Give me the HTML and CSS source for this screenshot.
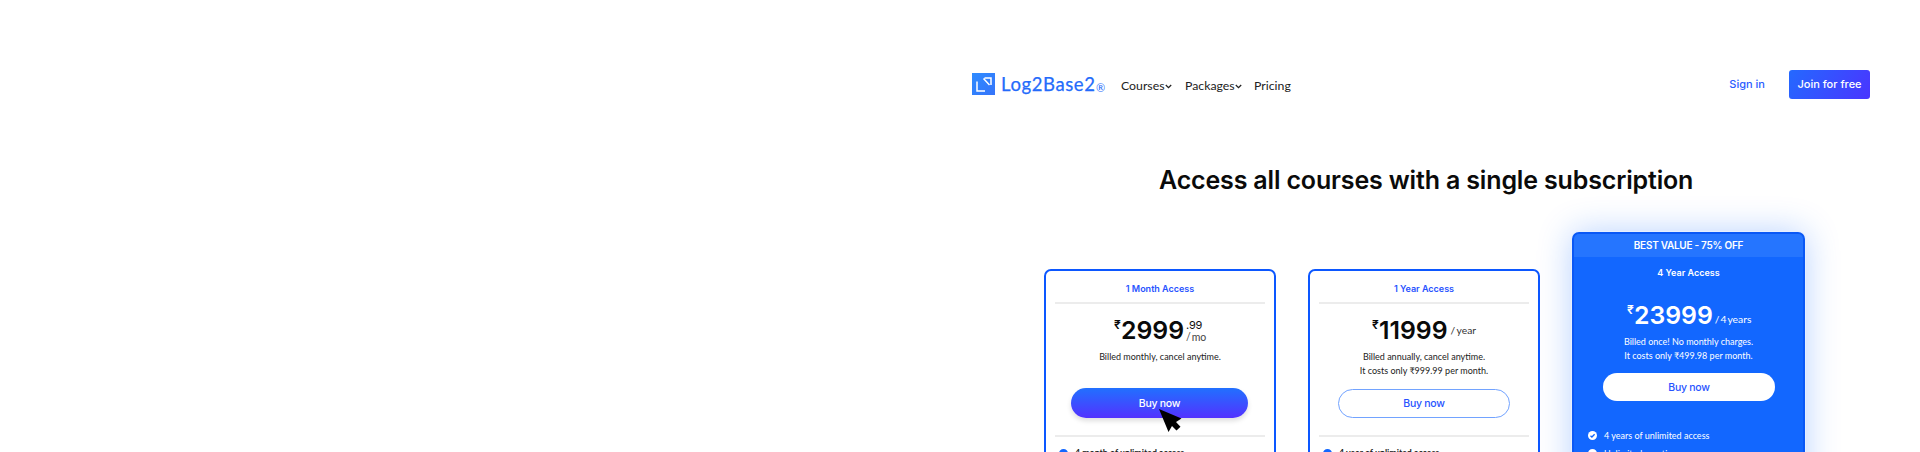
FILE: index.html
```html
<!DOCTYPE html>
<html lang="en">
<head>
<meta charset="utf-8">
<title>Log2Base2 Pricing</title>
<link rel="stylesheet" href="styles.css">
</head>
<body>
<div class="page">
  <header class="header">
    <svg class="mark" width="23" height="22" viewBox="0 0 23 22">
      <defs><linearGradient id="g" x1="0" y1="0" x2="1" y2="1"><stop offset="0" stop-color="#2e8bff"/><stop offset="1" stop-color="#3574fa"/></linearGradient></defs>
      <rect width="23" height="22" fill="url(#g)"/>
      <path d="M5 8.500v9.500h8M12.500 5h6.500v7M11.500 5.500l6 6.500" fill="none" stroke="#fff" stroke-width="1.500"/>
    </svg>
    <span class="wordmark">Log2Base2</span><span class="reg">®</span>
    <nav class="nav">
      <a class="courses">Courses</a>
      <svg class="chev" width="7" height="5" viewBox="0 0 7 5"><path d="M.8 1l2.700 2.700L6.200 1" /></svg>
      <a class="packages">Packages</a>
      <svg class="chev" width="7" height="5" viewBox="0 0 7 5"><path d="M.8 1l2.700 2.700L6.200 1" /></svg>
      <a class="pricing">Pricing</a>
    </nav>
    <a class="signin">Sign in</a>
    <a class="join">Join for free</a>
  </header>
  <h1 class="title">Access all courses with a single subscription</h1>
  <main class="plans">
    <section class="card month">
      <h2 class="name">1 Month Access</h2>
      <div class="price"><span class="cur">₹</span><span class="num">2999</span><span class="stack"><b>.99</b><span>/ mo</span></span></div>
      <p class="desc">Billed monthly, cancel anytime.</p>
      <a class="buy solid">Buy now
        <svg class="cursor" width="24" height="25" viewBox="0 0 24 25"><path d="M0 0L22.500 9.500L17 13L21.500 17.800L17.500 21.500L13 17L9.500 23Z"/></svg>
      </a>
      <div class="features"><div class="feature"><svg width="9" height="9" viewBox="0 0 9 9"><circle cx="4.500" cy="4.500" r="4.500" fill="#1267ff"/><path d="M2.500 4.700l1.400 1.300 2.700-2.800" fill="none" stroke="#fff"/></svg>4 month of unlimited access</div></div>
    </section>
    <section class="card year">
      <h2 class="name">1 Year Access</h2>
      <div class="price"><span class="cur">₹</span><span class="num">11999</span><span class="per">/ year</span></div>
      <p class="desc">Billed annually, cancel anytime.<br>It costs only ₹999.99 per month.</p>
      <a class="buy outline">Buy now</a>
      <div class="features"><div class="feature"><svg width="9" height="9" viewBox="0 0 9 9"><circle cx="4.500" cy="4.500" r="4.500" fill="#1267ff"/><path d="M2.500 4.700l1.400 1.300 2.700-2.800" fill="none" stroke="#fff"/></svg>4 year of unlimited access</div></div>
    </section>
    <section class="card best">
      <div class="ribbon">BEST VALUE - 75% OFF</div>
      <h2 class="name">4 Year Access</h2>
      <div class="price"><span class="cur">₹</span><span class="num">23999</span><span class="per">/ 4 years</span></div>
      <p class="desc">Billed once! No monthly charges.<br>It costs only ₹499.98 per month.</p>
      <a class="buy white">Buy now</a>
      <div class="features">
        <div class="feature"><svg width="9" height="9" viewBox="0 0 9 9"><circle cx="4.500" cy="4.500" r="4.500" fill="#fff"/><path d="M2.500 4.700l1.400 1.300 2.700-2.800" fill="none" stroke="#1267ff" stroke-width="1.300"/></svg>4 years of unlimited access</div>
        <div class="feature"><svg width="9" height="9" viewBox="0 0 9 9"><circle cx="4.500" cy="4.500" r="4.500" fill="#fff"/></svg>Unlimited practice</div>
      </div>
    </section>
  </main>
</div>
</body>
</html>
```
FILE: styles.css
```css
* { box-sizing: border-box; }
body { margin: 0; background: #fff; font-family: Lato, sans-serif; }
.page { height: 452px; overflow: hidden; padding: 70px 50px 0 972px; white-space: nowrap; }
.header { display: flex; height: 29px; align-items: flex-start; }
.mark { margin-top: 3px; flex: none; }
.wordmark { width: 95px; margin-left: 6px; font: 400 18.5px/29px Lato, sans-serif; color: #246bfb; letter-spacing: .6px; -webkit-text-stroke: .25px #246bfb; }
.reg { width: 9px; font: 400 11px/35px Lato, sans-serif; color: #246bfb; }
.nav { display: flex; font-size: 12.300px; line-height: 31px; color: #222; margin-left: 16px; }
.courses { width: 44px; }
.chev { margin: 14px 0 0; flex: none; }
.chev path { fill: none; stroke: #222; stroke-width: 1.300; }
.packages { margin-left: 13px; width: 50px; }
.pricing { margin-left: 12px; }
.signin { margin-left: auto; font: 500 11px/28px Inter, sans-serif; color: #2a5cff; }
.join { margin-left: 24px; width: 81px; height: 29px; border-radius: 3px; background: linear-gradient(120deg, #2469ff, #4a35ff); color: #fff; font: 500 11px/28px Inter, sans-serif; text-align: center; }
.title { margin: 64px 0 0 187px; font: 600 25px/34px Inter, sans-serif; letter-spacing: -.16px; color: #0a0a0a; }
.plans { display: flex; margin: 35px 0 0 72px; align-items: flex-start; }
.card { width: 232px; height: 260px; flex: none; margin-top: 37px; border: 2px solid #0c57ff; border-radius: 7px; background: #fff; }
.year { margin-left: 32px; }
.best { margin: 0 0 0 32px; width: 233px; height: 300px; background: #1267ff; border-color: #0a58f5; box-shadow: 0 0 0 1px #e6efff, 0 0 34px rgba(18,103,255,.3); }
.name { margin: 0 9px; height: 33px; border-bottom: 2px solid #ececec; font: 600 9px/35px Inter, sans-serif; color: #2853ff; text-align: center; }
.price { display: flex; height: 40px; margin-top: 6px; color: #0a0a0a; padding-left: 68px; }
.year .price { padding-left: 62px; }
.best .price { padding-left: 53px; margin-top: 5px; }
.cur { width: 7px; font: 600 12px/30px Inter, sans-serif; }
.num { font: 600 24.800px/40px Inter, sans-serif; }
.stack { display: flex; flex-direction: column; margin: 9px 0 0 2px; font-size: 10.500px; line-height: 12px; word-spacing: -1.800px; color: #444; }
.stack b { font: 400 11px/12px Inter, sans-serif; letter-spacing: -.2px; color: #111; }
.per { margin-left: 3px; font-size: 10.300px; line-height: 41px; word-spacing: -1px; color: #333; }
.desc { margin: 0; height: 28px; font-size: 9px; line-height: 14px; text-align: center; color: #222; }
.buy { display: block; position: relative; margin: 11px auto 0; width: 172px; height: 29px; border-radius: 15px; font: 500 10.500px/29px Inter, sans-serif; letter-spacing: -.25px; text-align: center; color: #2853ff; }
.solid { width: 177px; height: 30px; margin: 10px 0 0 25px; background: linear-gradient(#2170ff, #5332ff); color: #fff; line-height: 31px; box-shadow: 0 3px 5px rgba(0,0,0,.13); }
.outline { border: 1px solid #72a3ff; line-height: 28px; }
.white { background: #fff; margin: 10px 0 0 29px; height: 28px; }
.cursor { position: absolute; left: 88px; top: 21px; }
.features { border-top: 2px solid #ececec; margin: 17px 9px 0; padding-top: 8px; }
.feature { display: flex; align-items: center; gap: 7px; height: 14px; margin-bottom: 4px; padding-left: 4px; font-size: 9px; color: #222; }
.month .feature, .year .feature { font-weight: 700; font-size: 8.800px; }
.month .feature svg, .year .feature svg { margin-top: 2px; }
.ribbon { height: 23px; background: #2575ff; border-radius: 5px 5px 0 0; color: #fff; font: 600 10px/23px Inter, sans-serif; letter-spacing: -.27px; text-align: center; }
.best .name { color: #fff; border: 0; line-height: 31px; }
.best .price, .best .desc, .best .per, .best .feature { color: #fff; }
.best .per { line-height: 48px; margin-left: 2px; word-spacing: -1.500px; }
.best .features { border: 0; margin: 19px 9px 0; }
.best .feature { padding-left: 5px; }
```
